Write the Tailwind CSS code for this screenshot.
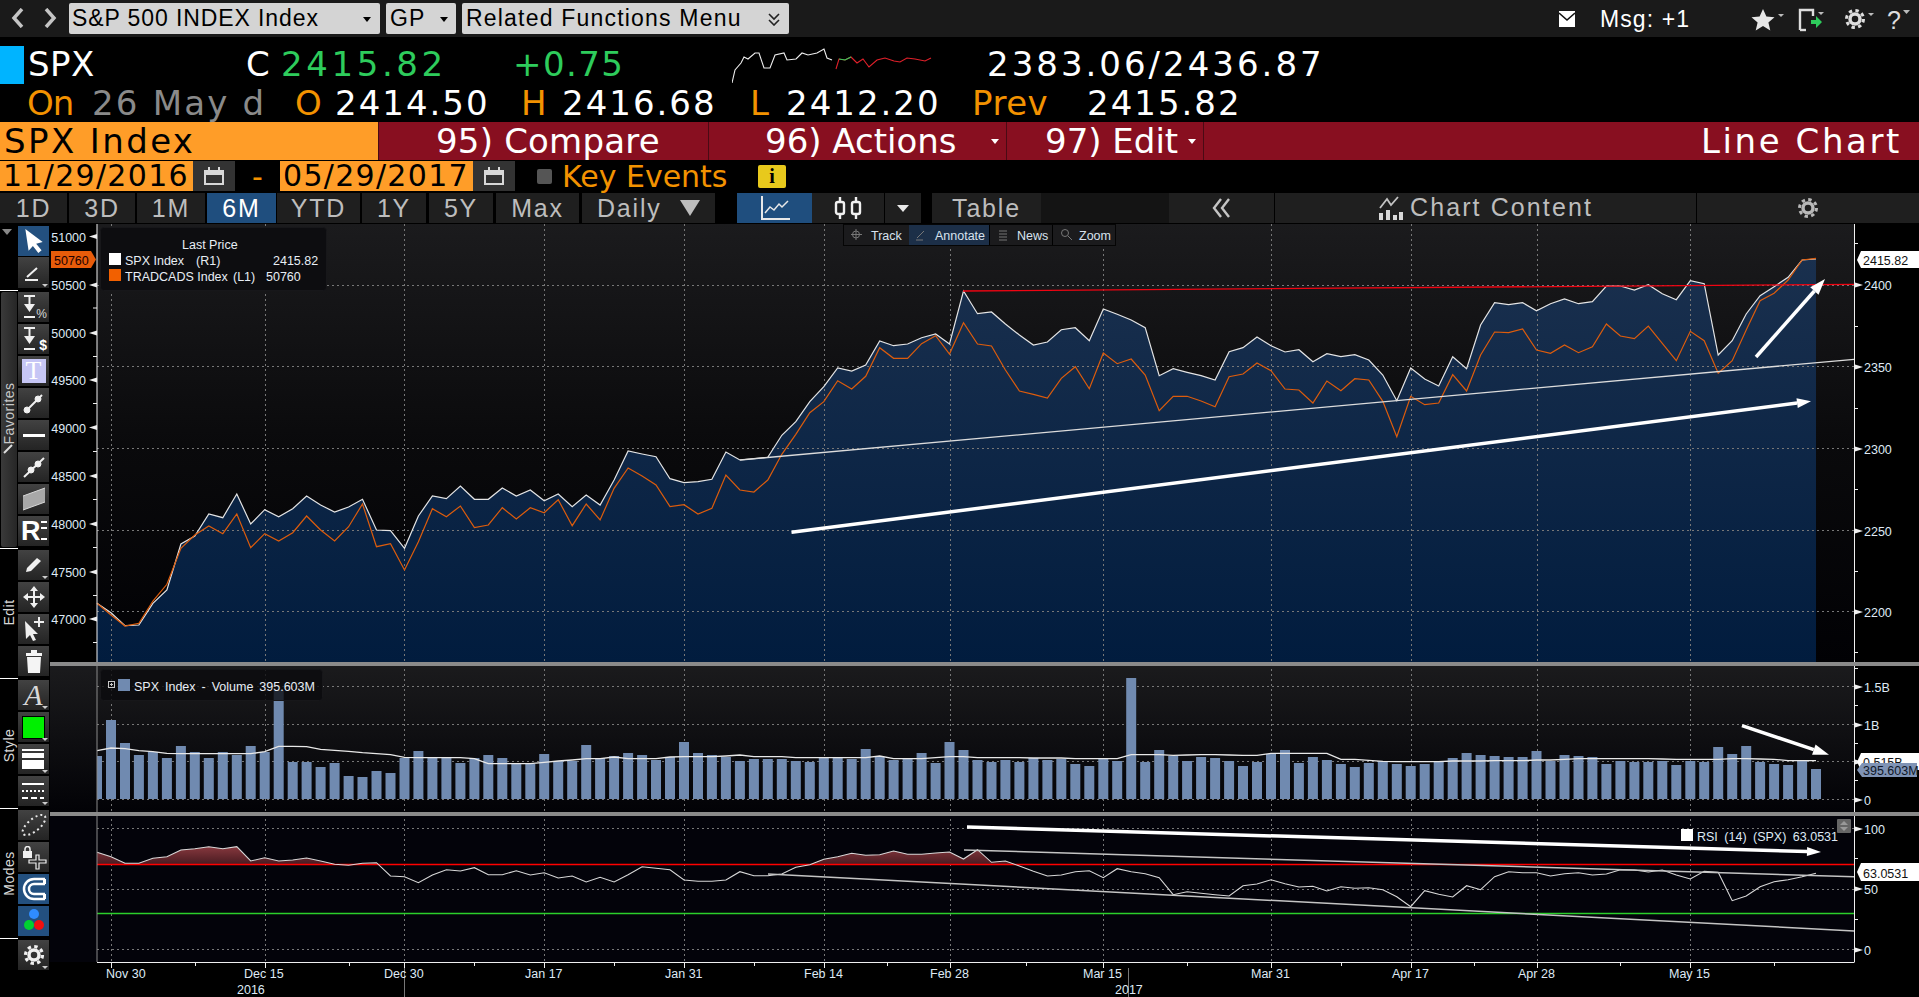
<!DOCTYPE html>
<html lang="en">
<head>
<meta charset="UTF-8">
<title>SPX Index Line Chart</title>
<script src="https://cdn.jsdelivr.net/npm/@tailwindcss/browser@4"></script>
</head>
<body class="bg-black w-[1919px] h-[997px] overflow-hidden text-white font-['Liberation_Sans',sans-serif]">

<!-- Top bar -->
<div class="h-[37px] bg-[#1a1a1a] flex items-center relative text-[23px] text-black">
  <svg class="absolute left-[11px] top-[8px]" width="50" height="20" viewBox="0 0 50 20" fill="none" stroke="#c4c4c4" stroke-width="3.500"><path d="M11 1 3 10l8 9M35 1l8 9-8 9"/></svg>
  <div class="absolute left-[69px] top-[3px] w-[311px] h-[31px] bg-[#d4d4d4] rounded-[2px] flex items-center pl-[3px] tracking-[0.900px]">S&amp;P 500 INDEX Index
    <span class="absolute right-[9px] top-[14px] border-x-[4px] border-x-transparent border-t-[5px] border-t-black"></span></div>
  <div class="absolute left-[386px] top-[3px] w-[70px] h-[31px] bg-[#d4d4d4] rounded-[2px] flex items-center pl-[4px] tracking-[1px]">GP
    <span class="absolute right-[8px] top-[14px] border-x-[4px] border-x-transparent border-t-[5px] border-t-black"></span></div>
  <div class="absolute left-[462px] top-[3px] w-[327px] h-[31px] bg-[#d4d4d4] rounded-[2px] flex items-center pl-[4px] tracking-[1.200px]">Related Functions Menu
    <svg class="absolute right-[9px] top-[10px]" width="12" height="13" viewBox="0 0 12 13" fill="none" stroke="#222" stroke-width="1.6"><path d="M1 1l5 5 5-5M1 7l5 5 5-5"/></svg></div>
  <svg class="absolute left-[1559px] top-[11px]" width="16" height="16" viewBox="0 0 16 16"><rect width="16" height="16" fill="#fff"/><path d="M0 2l8 7 8-7" fill="none" stroke="#111" stroke-width="1.6"/></svg>
  <span class="absolute left-[1600px] top-[2px] text-white text-[23px] tracking-[1.100px]">Msg: +1</span>
  <svg class="absolute left-[1750px] top-[8px]" width="36" height="24" viewBox="0 0 36 24"><path d="M13 1l3.4 7.6 8.1.7-6.1 5.3 1.9 8L13 18l-7.3 4.6 1.9-8L1.500 9.300l8.100-.7z" fill="#e6e6e6"/><path d="M28 6h6l-3 3z" fill="#bbb"/></svg>
  <svg class="absolute left-[1798px] top-[8px]" width="34" height="24" viewBox="0 0 34 24"><path d="M2 22V2h13v6" fill="none" stroke="#ddd" stroke-width="2.400"/><path d="M2 22h6" stroke="#ddd" stroke-width="2.400"/><path d="M13 12h5V8l6 6-6 6v-4h-5z" fill="#2ecc5c"/><path d="M20 4h6l-3 3z" fill="#bbb"/></svg>
  <svg class="absolute left-[1843px] top-[8px]" width="34" height="24" viewBox="0 0 34 24"><circle cx="12" cy="11" r="5" fill="none" stroke="#ddd" stroke-width="3.500"/><circle cx="12" cy="11" r="8.500" fill="none" stroke="#ddd" stroke-width="3" stroke-dasharray="3.400 3.300"/><path d="M25 5h6l-3 3z" fill="#bbb"/></svg>
  <span class="absolute left-[1887px] top-[2px] text-[#ddd] text-[25px]">?</span>
  <svg class="absolute left-[1903px] top-[10px]" width="8" height="5" viewBox="0 0 8 5"><path d="M0 0h7l-3.500 4z" fill="#bbb"/></svg>
</div>

<!-- Quote row 1 -->
<div class="h-[48px] pt-[7px] flex items-center text-[34px] font-['DejaVu_Sans',sans-serif] whitespace-pre">
  <div class="w-[24px] h-[38px] bg-[#00b4ff] self-start mt-[2px]"></div>
  <span class="ml-[4px] w-[218px] tracking-[0.5px]">SPX</span>
  <span class="w-[35px]">C</span>
  <span class="w-[232px] text-[#2ecc5c] tracking-[3.600px]">2415.82</span>
  <span class="w-[219px] text-[#2ecc5c] tracking-[1.400px]">+0.75</span>
  <svg class="w-[203px] h-[37px] self-start mt-[4px]" viewBox="732 48 203 37" fill="none" stroke-width="1.100">
    <polyline stroke="#eee" points="732,83 735,70 741,63 744,57 748,59 755,53 759,53 764,68 770,68 775,55 784,53 787,60 796,59 802,53 808,55 817,53 824,49 827,58 832,60"/>
    <polyline stroke="#e0202a" points="836,69 839,59 845,60 851,57 857,63 863,59 869,67 877,60 885,58 894,61 900,62 907,58 915,59 925,61 931,58"/>
    <polyline stroke="#2ecc5c" points="839,59 845,60 851,57M877,60 885,58M907,58 915,59 M925,61 935,57"/>
  </svg>
  <span class="ml-[52px] tracking-[3px]">2383.06/2436.87</span>
</div>

<!-- Quote row 2 -->
<div class="h-[37px] flex items-center pl-[27px] text-[34px] font-['DejaVu_Sans',sans-serif] whitespace-pre">
  <span class="w-[65px] text-[#f39200] tracking-[-1px]">On</span>
  <span class="w-[203px] text-[#8a8a8a] tracking-[2.200px]">26 May d</span>
  <span class="w-[40px] text-[#f39200]">O</span>
  <span class="w-[186px] tracking-[2px]">2414.50</span>
  <span class="w-[41px] text-[#f39200]">H</span>
  <span class="w-[188px] tracking-[2px]">2416.68</span>
  <span class="w-[36px] text-[#f39200]">L</span>
  <span class="w-[186px] tracking-[2px]">2412.20</span>
  <span class="w-[115px] text-[#f39200] tracking-[0.5px]">Prev</span>
  <span class="tracking-[2px]">2415.82</span>
</div>

<!-- Title bar -->
<div class="h-[38px] flex text-[34px] font-['DejaVu_Sans',sans-serif] bg-[#880f20] whitespace-pre">
  <div class="w-[378px] bg-[#ff9d28] text-black pl-[4px] leading-[38px] tracking-[2.400px]">SPX Index</div>
  <div class="w-[330px] border-l border-[#4a0a14] pl-[57px] leading-[38px] tracking-[0.200px]">95) Compare</div>
  <div class="w-[298px] border-l border-[#4a0a14] pl-[56px] leading-[38px] relative">96) Actions<span class="absolute right-[7px] top-[17px] border-x-[4px] border-x-transparent border-t-[5px] border-t-white"></span></div>
  <div class="w-[197px] border-l border-[#4a0a14] pl-[38px] leading-[38px] relative">97) Edit<span class="absolute right-[7px] top-[17px] border-x-[4px] border-x-transparent border-t-[5px] border-t-white"></span></div>
  <div class="flex-1 border-l border-[#4a0a14] text-right pr-[17px] leading-[38px] tracking-[2.600px]">Line Chart</div>
</div>

<!-- Date row -->
<div class="h-[30px] mt-[1px] flex items-center text-[30px] font-['DejaVu_Sans',sans-serif] whitespace-pre">
  <div class="w-[193px] h-[30px] bg-[#ff9d28] text-black leading-[30px] pl-[3px] tracking-[1.300px]">11/29/2016</div>
  <div class="w-[42px] h-[30px] bg-[#333] flex items-center justify-center">
    <svg width="20" height="18" viewBox="0 0 20 18"><rect x="0" y="3" width="20" height="15" fill="#d8d8d8"/><rect x="2" y="8" width="16" height="8" fill="#333"/><rect x="4" y="0" width="2" height="5" fill="#d8d8d8"/><rect x="14" y="0" width="2" height="5" fill="#d8d8d8"/></svg>
  </div>
  <span class="w-[45px] text-center text-[#f39200]">-</span>
  <div class="w-[193px] h-[30px] bg-[#ff9d28] text-black leading-[30px] pl-[3px] tracking-[1.300px]">05/29/2017</div>
  <div class="w-[42px] h-[30px] bg-[#333] flex items-center justify-center">
    <svg width="20" height="18" viewBox="0 0 20 18"><rect x="0" y="3" width="20" height="15" fill="#d8d8d8"/><rect x="2" y="8" width="16" height="8" fill="#333"/><rect x="4" y="0" width="2" height="5" fill="#d8d8d8"/><rect x="14" y="0" width="2" height="5" fill="#d8d8d8"/></svg>
  </div>
  <div class="ml-[22px] w-[15px] h-[15px] bg-[#555] rounded-[2px]"></div>
  <span class="ml-[10px] w-[196px] text-[#f39200]">Key Events</span>
  <div class="w-[28px] h-[23px] bg-[#e8c91c] rounded-[2px] flex items-center justify-center text-black text-[20px] font-bold font-['Liberation_Serif',serif]">i</div>
</div>

<!-- Range toolbar -->
<div class="h-[30px] mt-[2px] flex text-[#bdbdbd] text-[25px] tracking-[1.800px] whitespace-pre">
  <div class="w-[67px] mr-[2px] bg-[#1f1f1f] text-center leading-[30px]">1D</div>
  <div class="w-[66px] mr-[2px] bg-[#1f1f1f] text-center leading-[30px]">3D</div>
  <div class="w-[68px] mr-[2px] bg-[#1f1f1f] text-center leading-[30px]">1M</div>
  <div class="w-[69px] mr-[1px] bg-[#1f4e7e] text-white text-center leading-[30px]">6M</div>
  <div class="w-[83px] mr-[2px] bg-[#1f1f1f] text-center leading-[30px]">YTD</div>
  <div class="w-[64px] mr-[3px] bg-[#1f1f1f] text-center leading-[30px]">1Y</div>
  <div class="w-[64px] mr-[3px] bg-[#1f1f1f] text-center leading-[30px]">5Y</div>
  <div class="w-[83px] mr-[3px] bg-[#1f1f1f] text-center leading-[30px]">Max</div>
  <div class="w-[133px] mr-[22px] bg-[#1f1f1f] leading-[30px] pl-[15px] relative">Daily<span class="absolute right-[15px] top-[7px] border-x-[10px] border-x-transparent border-t-[16px] border-t-[#bdbdbd]"></span></div>
  <div class="w-[75px] bg-[#1f4e7e] flex items-center justify-center">
    <svg width="32" height="26" viewBox="0 0 32 26" fill="none" stroke="#e8e8e8" stroke-width="2"><path d="M3 1v23h28"/><path d="M6 18l5-6 4 3 5-6 3 3 6-6" stroke-width="1.500"/></svg>
  </div>
  <div class="w-[72px] mr-[1px] bg-[#1f1f1f] flex items-center justify-center">
    <svg width="28" height="24" viewBox="0 0 28 24" fill="none" stroke="#f0f0f0" stroke-width="2.400"><path d="M6 1v5M6 18v5M22 1v5M22 18v5"/><rect x="2" y="6" width="8" height="12" rx="2"/><rect x="18" y="6" width="8" height="12" rx="2"/></svg>
  </div>
  <div class="w-[36px] mr-[11px] bg-[#1f1f1f] flex items-center justify-center"><span class="border-x-[6px] border-x-transparent border-t-[7px] border-t-[#e8e8e8]"></span></div>
  <div class="w-[109px] bg-[#1f1f1f] text-center leading-[30px]">Table</div>
  <div class="w-[128px] bg-[#141414]"></div>
  <div class="w-[105px] mr-[1px] bg-[#1f1f1f] flex items-center justify-center">
    <svg width="22" height="20" viewBox="0 0 22 20" fill="none" stroke="#c4c4c4" stroke-width="2.400"><path d="M10 1 3 10l7 9M18 1l-7 9 7 9"/></svg>
  </div>
  <div class="w-[421px] mr-[1px] bg-[#1f1f1f] flex items-center justify-center gap-[6px] tracking-[2.100px]">
    <svg width="26" height="24" viewBox="0 0 26 24"><path d="M2 12l7-9 4 6 7-8" fill="none" stroke="#c4c4c4" stroke-width="1.800"/><path d="M1 17h4v7H1zM8 14h4v10H8zM15 19h4v5h-4zM21 16h4v8h-4z" fill="#d8d8d8"/></svg>
    <span>Chart Content</span>
  </div>
  <div class="flex-1 bg-[#1f1f1f] flex items-center justify-center">
    <svg width="22" height="22" viewBox="0 0 22 22" fill="none" stroke="#b8b8b8"><circle cx="11" cy="11" r="5" stroke-width="3.500"/><circle cx="11" cy="11" r="8.500" stroke-width="3" stroke-dasharray="3.400 3.270"/></svg>
  </div>
</div>

<!-- Chart area -->
<div class="h-[773px] mt-[1px] flex relative">
  <!-- Left tool rail -->
  <div class="w-[50px] shrink-0 text-[#d8d8d8] text-[14px]">
    <div class="h-[66px] flex">
      <div class="w-[18px] pt-[5px] pl-[2px]"><span class="block w-0 border-x-[5px] border-x-transparent border-t-[6px] border-t-[#888]"></span></div>
      <div class="flex flex-col gap-[1px] pt-[2px]">
        <div class="w-[31px] h-[30px] bg-[#23507f] flex items-center justify-center"><svg width="24" height="26" viewBox="0 0 22 24"><path d="M3 1l16 12-6 1.500 5 6-3 2.500-5-6.500L6 21z" fill="#fff"/></svg></div>
        <div class="w-[31px] h-[31px] bg-linear-to-b from-[#424242] to-[#242424] flex items-center justify-center relative"><svg width="20" height="18" viewBox="0 0 20 18" fill="none" stroke="#eee" stroke-width="2"><path d="M3 13 13 4M1 16h13"/></svg><span class="absolute right-[1px] bottom-[1px] border-x-[3px] border-x-transparent border-t-[3px] border-t-[#ccc]"></span></div>
      </div>
    </div>

    <div class="h-[258px] flex">
      <div class="w-[18px] border-t border-white mr-0 relative">
        <div class="absolute left-[1px] top-[1px] w-[16px] h-[255px] bg-linear-to-r from-[#3a3a3a] to-[#262626] rounded-[2px]"></div>
        <span class="absolute left-[-21px] top-[113px] w-[60px] -rotate-90 text-[14px] tracking-[0.5px] text-[#c8c8c8]">Favorites</span>
        <svg class="absolute left-[3px] top-[152px]" width="11" height="11" viewBox="0 0 11 11"><path d="M1 10l8-8" stroke="#ddd" stroke-width="2"/></svg>
      </div>
      <div class="flex flex-col gap-[2px] pt-[2px]">
        <div class="w-[31px] h-[30px] bg-linear-to-b from-[#424242] to-[#242424] relative text-[12px]"><svg class="absolute left-[3px] top-[2px]" width="18" height="26" viewBox="0 0 18 26" fill="#f0f0f0"><path d="M3 1h11v2H9.500v7H14l-5.500 8L3 10h4.500V3H3zM3 22h11v2H3z"/></svg><span class="absolute right-[2px] bottom-[2px] leading-none">%</span></div>
        <div class="w-[31px] h-[30px] bg-linear-to-b from-[#424242] to-[#242424] relative text-[14px] font-bold"><svg class="absolute left-[3px] top-[2px]" width="18" height="26" viewBox="0 0 18 26" fill="#f0f0f0"><path d="M3 1h11v2H9.500v7H14l-5.500 8L3 10h4.500V3H3zM3 22h11v2H3z"/></svg><span class="absolute right-[2px] bottom-[2px] leading-none text-white">$</span></div>
        <div class="w-[31px] h-[30px] bg-linear-to-b from-[#424242] to-[#242424] flex items-center justify-center"><div class="w-[24px] h-[24px] bg-[#c6c6f5] text-white text-center text-[26px] leading-[24px] font-['Liberation_Serif',serif]">T</div></div>
        <div class="w-[31px] h-[30px] bg-linear-to-b from-[#424242] to-[#242424] flex items-center justify-center"><svg width="24" height="24" viewBox="0 0 24 24" fill="#f0f0f0" stroke="#f0f0f0"><path d="M4 20 20 4" stroke-width="2"/><circle cx="5" cy="19" r="3"/><circle cx="16" cy="8" r="3"/></svg></div>
        <div class="w-[31px] h-[30px] bg-linear-to-b from-[#424242] to-[#242424] flex items-center justify-center"><div class="w-[22px] h-[3px] bg-white"></div></div>
        <div class="w-[31px] h-[30px] bg-linear-to-b from-[#424242] to-[#242424] flex items-center justify-center"><svg width="24" height="24" viewBox="0 0 24 24" fill="#f0f0f0" stroke="#f0f0f0"><path d="M2 22 22 3" stroke-width="2"/><circle cx="9" cy="15" r="3"/><circle cx="16" cy="9" r="3"/></svg></div>
        <div class="w-[31px] h-[30px] bg-linear-to-b from-[#424242] to-[#242424] flex items-center justify-center"><svg width="24" height="24" viewBox="0 0 24 24"><path d="M1 9 23 1v14L1 23z" fill="#a8a8a8"/><path d="M1 9 23 1M1 23 23 15" stroke="#d8d8d8"/></svg></div>
        <div class="w-[31px] h-[30px] bg-linear-to-b from-[#424242] to-[#242424] relative"><span class="absolute left-[3px] top-[1px] text-[27px] leading-[28px] font-bold text-white">R</span><span class="absolute right-[2px] top-[5px] w-[6px] h-[2px] bg-white"></span><span class="absolute right-[2px] top-[11px] w-[6px] h-[2px] bg-white"></span><span class="absolute right-[2px] top-[22px] w-[6px] h-[2px] bg-white"></span></div>
      </div>
    </div>

    <div class="h-[130px] flex">
      <div class="w-[18px] border-t border-white relative"><span class="absolute left-[-21px] top-[53px] w-[60px] text-center -rotate-90 text-[14px] tracking-[0.5px]">Edit</span></div>
      <div class="flex flex-col gap-[2px] pt-[2px]">
        <div class="w-[31px] h-[30px] bg-linear-to-b from-[#424242] to-[#242424] flex items-center justify-center relative"><svg width="22" height="20" viewBox="0 0 22 20"><path d="M4 13 14 3l4 3L8 16l-5 1z" fill="#f0f0f0"/></svg><span class="absolute right-[1px] bottom-[1px] border-x-[3px] border-x-transparent border-t-[3px] border-t-[#ccc]"></span></div>
        <div class="w-[31px] h-[30px] bg-linear-to-b from-[#424242] to-[#242424] flex items-center justify-center"><svg width="24" height="24" viewBox="0 0 24 24" fill="#f0f0f0"><path d="M12 1l4 5h-3v5h5V8l5 4-5 4v-3h-5v5h3l-4 5-4-5h3v-5H6v3l-5-4 5-4v3h5V6H8z"/></svg></div>
        <div class="w-[31px] h-[30px] bg-linear-to-b from-[#424242] to-[#242424] flex items-center justify-center"><svg width="24" height="26" viewBox="0 0 24 26" fill="#f0f0f0"><path d="M3 5l13 13-5 0 3 6-3 1-3-6-4 4zM16 1h2v4h4v2h-4v4h-2V7h-4V5h4z"/></svg></div>
        <div class="w-[31px] h-[30px] bg-linear-to-b from-[#424242] to-[#242424] flex items-center justify-center"><svg width="20" height="26" viewBox="0 0 20 26" fill="#f4f4f4"><path d="M2 5h16v3H2zM7 2h6v3H7zM3 9h14l-1 16H4z"/></svg></div>
      </div>
    </div>

    <div class="h-[130px] flex">
      <div class="w-[18px] border-t border-white relative"><span class="absolute left-[-21px] top-[56px] w-[60px] text-center -rotate-90 text-[14px] tracking-[0.5px]">Style</span></div>
      <div class="flex flex-col gap-[2px] pt-[2px]">
        <div class="w-[31px] h-[30px] bg-linear-to-b from-[#424242] to-[#242424] relative text-center font-['Liberation_Serif',serif] italic text-[30px] leading-[30px]">A<span class="absolute right-[1px] bottom-[1px] border-x-[3px] border-x-transparent border-t-[3px] border-t-[#ccc]"></span></div>
        <div class="w-[31px] h-[30px] bg-linear-to-b from-[#424242] to-[#242424] flex items-center justify-center relative"><div class="w-[23px] h-[23px] bg-[#00f000] border border-black"></div><span class="absolute right-[1px] bottom-[1px] border-x-[3px] border-x-transparent border-t-[3px] border-t-[#ccc]"></span></div>
        <div class="w-[31px] h-[30px] bg-linear-to-b from-[#424242] to-[#242424] relative"><span class="absolute left-[4px] top-[5px] w-[22px] h-[2px] bg-white"></span><span class="absolute left-[4px] top-[9px] w-[22px] h-[5px] bg-white"></span><span class="absolute left-[4px] top-[16px] w-[22px] h-[9px] bg-white"></span><span class="absolute right-[1px] bottom-[1px] border-x-[3px] border-x-transparent border-t-[3px] border-t-[#ccc]"></span></div>
        <div class="w-[31px] h-[30px] bg-linear-to-b from-[#424242] to-[#242424] relative"><svg class="absolute left-[4px] top-[6px]" width="22" height="18" viewBox="0 0 22 18" stroke="#fff" stroke-width="2"><path d="M0 2h22"/><path d="M0 9h22" stroke-dasharray="2 2"/><path d="M0 16h22" stroke-dasharray="6 3"/></svg><span class="absolute right-[1px] bottom-[1px] border-x-[3px] border-x-transparent border-t-[3px] border-t-[#ccc]"></span></div>
      </div>
    </div>

    <div class="h-[130px] flex">
      <div class="w-[18px] border-t border-white relative"><span class="absolute left-[-21px] top-[54px] w-[60px] text-center -rotate-90 text-[14px] tracking-[0.5px]">Modes</span></div>
      <div class="flex flex-col gap-[2px] pt-[2px]">
        <div class="w-[31px] h-[30px] bg-linear-to-b from-[#424242] to-[#242424] flex items-center justify-center"><svg width="26" height="26" viewBox="0 0 26 26"><ellipse cx="13" cy="13" rx="14" ry="6" transform="rotate(-40 13 13)" fill="none" stroke="#e8e8e8" stroke-width="2" stroke-dasharray="2 3"/></svg></div>
        <div class="w-[31px] h-[30px] bg-linear-to-b from-[#424242] to-[#242424] relative"><svg class="absolute left-[5px] top-[4px]" width="24" height="25" viewBox="0 0 24 25" fill="#f0f0f0"><rect x="0" y="5" width="9" height="7"/><path d="M2 5V3a2.500 2.500 0 0 1 5 0v2" fill="none" stroke="#f0f0f0" stroke-width="1.500"/><path d="M13 9h3v5h7v3h-7v6h-3v-6H6v-3h7z" fill="none" stroke="#f0f0f0" stroke-width="1.200"/></svg></div>
        <div class="w-[31px] h-[30px] bg-[#23507f] flex items-center justify-center"><svg width="24" height="24" viewBox="0 0 24 24" fill="none" stroke="#fff" stroke-width="2.500"><path d="M23 2H12a10 10 0 0 0 0 20h11M23 7H12a5 5 0 0 0 0 10h11"/><path d="M23 2v5M23 17v5" stroke-width="4"/></svg></div>
        <div class="w-[31px] h-[30px] bg-[#23507f] relative"><span class="absolute left-[11px] top-[3px] w-[10px] h-[10px] rounded-full bg-[#2f8cff]"></span><span class="absolute left-[6px] top-[14px] w-[10px] h-[10px] rounded-full bg-[#00d030]"></span><span class="absolute left-[16px] top-[14px] w-[10px] h-[10px] rounded-full bg-[#f01010]"></span></div>
      </div>
    </div>

    <div class="h-[35px] flex">
      <div class="w-[18px] border-t border-white"></div>
      <div class="pt-[2px]">
        <div class="w-[31px] h-[30px] bg-linear-to-b from-[#424242] to-[#242424] flex items-center justify-center relative"><svg width="22" height="22" viewBox="0 0 22 22" fill="none" stroke="#f0f0f0"><circle cx="11" cy="11" r="5" stroke-width="3.500"/><circle cx="11" cy="11" r="8.500" stroke-width="3.200" stroke-dasharray="3.400 3.270"/></svg><span class="absolute right-[1px] bottom-[1px] border-x-[3px] border-x-transparent border-t-[3px] border-t-[#ccc]"></span></div>
      </div>
    </div>
  </div>

  <!-- Chart canvas, drawn in page coordinates -->
  <svg id="chart" class="w-[1869px] h-[773px] shrink-0" viewBox="50 224 1869 773" font-family="Liberation Sans" font-size="12.5">
    <defs>
      <linearGradient id="panelA" x1="0" y1="0" x2="0" y2="1"><stop offset="0" stop-color="#1b1b1d"/><stop offset="0.5" stop-color="#0a0a0c"/><stop offset="1" stop-color="#010104"/></linearGradient>
      <linearGradient id="panelB" x1="0" y1="0" x2="0" y2="1"><stop offset="0" stop-color="#1b1b1d"/><stop offset="1" stop-color="#020206"/></linearGradient>
      <linearGradient id="area" gradientUnits="userSpaceOnUse" x1="0" y1="255" x2="0" y2="663"><stop offset="0" stop-color="#1a304e"/><stop offset="1" stop-color="#011c3e"/></linearGradient>
      <linearGradient id="rsiFill" gradientUnits="userSpaceOnUse" x1="0" y1="845" x2="0" y2="864"><stop offset="0" stop-color="#8c3a40"/><stop offset="1" stop-color="#4a1c22"/></linearGradient>
      <clipPath id="above70"><rect x="97" y="820" width="1760" height="44"/></clipPath>
      <clipPath id="plot"><rect x="97" y="224" width="1757" height="740"/></clipPath>
    </defs>
    <rect x="97" y="224" width="1757" height="439" fill="url(#panelA)"/>
    <rect x="50" y="664" width="1804" height="149" fill="url(#panelB)"/>
    <rect x="50" y="814" width="1804" height="148" fill="#03030a"/>
    <path id="areaPath" fill="url(#area)"/>
    <g id="grid" stroke="#777" stroke-dasharray="2 3"></g>
    <path id="rsiArea" fill="url(#rsiFill)" clip-path="url(#above70)"/>
    <g id="bars" fill="#708ab0" clip-path="url(#plot)"></g>
    <path d="M97 864.500H1854" stroke="#ff0000" stroke-width="1.700"/>
    <path d="M97 913.500H1854" stroke="#2bd02b" stroke-width="1.400"/>
    <path id="volAvg" fill="none" stroke="#e8e8e8" stroke-width="1.300"/>
    <path id="spx" fill="none" stroke="#e4e4e4" stroke-width="1.200"/>
    <path id="trad" fill="none" stroke="#dd5c0c" stroke-width="1.200"/>
    <path id="rsi" fill="none" stroke="#d8d8d8" stroke-width="1.100"/>
    <!-- Drawn trend lines -->
    <path d="M963 291 1855 284.300" stroke="#f00412" stroke-width="1.300"/>
    <path d="M740 460 1854 359.300" stroke="#dcdcdc" stroke-width="1.300"/>
    <path d="M964 850 1854 876.700" stroke="#c4c4c4" stroke-width="1.500"/>
    <path d="M768 874 1854 931" stroke="#c4c4c4" stroke-width="1.500"/>
    <g id="arrows" fill="#fff"></g>
    <!-- Axes -->
    <path d="M97 224V663" stroke="#f0f0f0"/>
    <path d="M97 664V962" stroke="#8a8a8a"/>
    <path d="M1854.500 224V962M97 962.500H1854.500" stroke="#f0f0f0"/>
    <g id="ticks"></g>
    <rect x="50" y="662" width="1869" height="4" fill="#8a8a8a"/>
    <rect x="50" y="812" width="1869" height="4" fill="#8a8a8a"/>
    <g id="labels" fill="#dfeaf5"></g>

    <!-- Price tags -->
    <polygon points="51,251 91,251 96,259.500 91,268 51,268" fill="#e85c0a"/>
    <text x="54" y="264.500" fill="#200" font-size="12.5">50760</text>
    <polygon points="1857,260 1861,251 1919,251 1919,268 1861,268" fill="#fff"/>
    <text x="1863" y="264.500" fill="#111">2415.82</text>
    <polygon points="1857,762 1861,753 1919,753 1919,770 1861,770" fill="#fff"/>
    <text x="1863" y="767" fill="#111">0.515B</text>
    <polygon points="1857,770 1862,763 1917,763 1917,777 1862,777" fill="#7f93b5"/>
    <text x="1863" y="775" fill="#101828">395.603M</text>
    <polygon points="1857,872 1861,863 1919,863 1919,881 1861,881" fill="#fff"/>
    <text x="1863" y="877.500" fill="#111">63.0531</text>

    <!-- Legends -->
    <rect x="100.500" y="227.500" width="226" height="63" rx="3" fill="#0d0d10" stroke="#17171a"/>
    <text x="182" y="248.500" fill="#e8eef5">Last Price</text>
    <rect x="109" y="253" width="12" height="12" fill="#fff"/>
    <text x="125" y="264.500" fill="#e8eef5">SPX Index</text>
    <text x="196" y="264.500" fill="#e8eef5">(R1)</text>
    <text x="273" y="264.500" fill="#e8eef5">2415.82</text>
    <rect x="109" y="269" width="12" height="12" fill="#f26000"/>
    <text x="125" y="280.500" fill="#e8eef5">TRADCADS Index</text>
    <text x="233" y="280.500" fill="#e8eef5">(L1)</text>
    <text x="266" y="280.500" fill="#e8eef5">50760</text>

    <rect x="100.500" y="669.500" width="222" height="31" rx="3" fill="#0a0a0d" fill-opacity="0.78" stroke="#17171a"/>
    <rect x="108.500" y="681.500" width="6" height="6" fill="none" stroke="#c8c8c8"/>
    <path d="M110 684.500h3M111.500 683v3" stroke="#c8c8c8"/>
    <rect x="118" y="679" width="12" height="12" fill="#708ab0"/>
    <text x="134" y="690.500" fill="#e8eef5" word-spacing="2.500">SPX Index - Volume 395.603M</text>

    <rect x="1681" y="829" width="12" height="12" fill="#fff"/>
    <text x="1697" y="840.500" fill="#dfeaf5" word-spacing="3">RSI (14) (SPX) 63.0531</text>
    <rect x="1837" y="819" width="14" height="14" rx="1" fill="#666"/>
    <path d="M1840 825h8l-4-4zM1840 827h8l-4 4z" fill="#999"/>

    <!-- Floating chart toolbar -->
    <rect x="843.500" y="224.500" width="272" height="21" fill="#1b1b1d" stroke="#050505"/>
    <rect x="909" y="225" width="80" height="20" fill="#1c2f48"/>
    <rect x="989" y="225" width="1" height="20" fill="#000"/>
    <rect x="1052" y="225" width="1" height="20" fill="#000"/>
    <g stroke="#777" fill="none"><circle cx="856" cy="234.500" r="3.500"/><path d="M856 229v11M851 234.500h11M917 238l7-7M916 240h7M999 231h8M999 234h8M999 237h8M999 240h8"/><circle cx="1065" cy="233" r="3.500"/><path d="M1068 236l4 4"/></g>
    <g fill="#d8e2ee"><text x="871" y="239.500">Track</text><text x="935" y="239.500">Annotate</text><text x="1017" y="239.500">News</text><text x="1079" y="239.500">Zoom</text></g>
  </svg>
</div>

<script>
  const X0 = 97, DX = 13.976;
  const xAt = i => X0 + DX * i;
  // values read as y positions, in zoom units of the panel they belong to
  const spxY = [1090,1118,1157,1155,1090,1050,912,888,822,833,762,852,809,830,806,768,795,816,801,778,870,872,925,828,768,776,738,778,778,744,768,750,782,762,800,765,795,720,633,642,650,716,728,725,718,636,660,656,652,586,545,485,440,384,393,375,303,317,312,293,282,312,153,221,216,252,285,315,306,269,263,302,207,223,240,263,407,386,397,407,420,335,323,291,317,336,329,365,341,350,344,360,405,482,384,417,438,350,386,255,188,194,188,212,191,177,191,185,138,138,150,134,161,179,122,131,345,302,222,167,140,112,60,57];
  const tradY = [1090,1125,1158,1150,1083,1033,925,885,858,881,822,923,881,903,878,828,870,903,860,792,920,911,990,905,806,830,798,863,855,803,837,803,818,779,857,792,840,745,684,708,735,800,794,822,805,705,750,756,720,643,583,518,485,422,447,409,323,355,355,311,287,342,248,312,318,390,453,463,474,415,380,446,339,371,357,405,512,469,469,483,500,410,402,369,392,447,450,489,423,452,416,420,484,590,469,494,489,404,453,345,276,278,267,330,340,315,338,320,252,288,296,258,310,362,274,302,400,362,270,182,160,120,60,55];
  const volTop = [288,180,249,285,276,294,258,276,294,276,285,258,276,90,306,306,321,309,348,351,333,339,294,273,294,294,309,294,285,294,312,312,282,303,303,255,294,288,279,285,300,291,246,279,285,291,303,297,297,297,303,306,294,294,297,267,291,300,297,279,309,246,270,300,306,300,306,294,300,297,312,318,294,303,54,306,270,288,303,291,294,303,318,306,282,270,309,291,300,312,321,309,303,312,318,312,306,294,279,285,288,291,291,273,303,285,288,291,312,303,306,306,303,315,303,306,261,282,258,306,312,315,303,327];
  const volAvgY = [272,264,266,272,275,280,281,281,281,281,281,281,275,259,259,260,268,271,274,278,281,284,292,293,293,293,293,296,311,311,311,311,307,303,300,296,296,291,296,296,296,291,290,290,290,288,285,290,290,290,293,293,293,293,293,293,288,296,296,296,293,290,290,293,293,293,293,294,294,294,296,296,296,296,284,284,284,286,285,284,284,285,286,286,280,280,280,280,280,298,298,301,304,305,305,305,305,303,303,303,302,302,302,300,300,298,296,296,296,296,296,296,297,298,298,298,298,296,296,297,298,302,302,302];
  const rsiY = [577,590,610,610,595,590,570,566,560,566,560,603,593,603,600,594,603,613,616,610,608,648,650,668,645,629,633,623,644,644,632,645,638,654,648,666,652,666,644,620,625,629,660,664,664,660,635,647,647,642,622,614,598,590,580,586,584,573,583,583,579,576,597,569,607,603,618,634,648,645,635,632,653,626,635,641,653,704,695,700,704,708,677,672,659,671,681,679,693,680,685,683,689,710,740,692,703,711,677,689,650,635,638,638,648,641,638,645,642,629,630,636,630,645,657,634,637,722,708,680,665,659,650,640];

  const line = (vals, base) => vals.map((y, i) => (i ? 'L' : 'M') + xAt(i).toFixed(1) + ' ' + (base + y / 3).toFixed(1)).join('');
  const endX = xAt(spxY.length - 1).toFixed(1);

  document.getElementById('spx').setAttribute('d', line(spxY, 240));
  document.getElementById('trad').setAttribute('d', line(tradY, 240));
  document.getElementById('areaPath').setAttribute('d', line(spxY, 240) + 'L' + endX + ' 662L' + X0 + ' 662Z');
  document.getElementById('volAvg').setAttribute('d', line(volAvgY, 660));
  document.getElementById('rsi').setAttribute('d', line(rsiY, 660));
  document.getElementById('rsiArea').setAttribute('d', line(rsiY, 660) + 'L' + endX + ' 864L' + X0 + ' 864Z');

  document.getElementById('bars').innerHTML = volTop.map((t, i) => {
    const y = 660 + t / 3;
    return `<rect x="${(xAt(i) - 5).toFixed(1)}" y="${y.toFixed(1)}" width="10" height="${(799 - y).toFixed(1)}"/>`;
  }).join('');

  let grid = '';
  [111.5, 265.5, 404.5, 544.5, 684.5, 824.5, 950.5, 1103.5, 1271.5, 1411.5, 1537.5, 1690.5].forEach(x => { grid += `<path d="M${x} 224V962"/>`; });
  [285.5, 366.5, 448.5, 530.5, 611.5, 686.5, 724.5, 761.5, 799.5, 828.5, 889.5, 949.5].forEach(y => { grid += `<path d="M97 ${y}H1854"/>`; });
  document.getElementById('grid').innerHTML = grid;

  const arrow = (x1, y1, x2, y2, w, len, half) => {
    const d = Math.hypot(x2 - x1, y2 - y1), ux = (x2 - x1) / d, uy = (y2 - y1) / d, bx = x2 - ux * len, by = y2 - uy * len;
    return `<path d="M${x1} ${y1}L${bx} ${by}" stroke="#fff" stroke-width="${w}"/><polygon points="${x2},${y2} ${bx - uy * half},${by + ux * half} ${bx + uy * half},${by - ux * half}"/>`;
  };
  document.getElementById('arrows').innerHTML =
    arrow(791.5, 532.3, 1811, 401.3, 3.5, 14, 5) +
    arrow(1756, 357, 1825, 279, 3.5, 16, 5.5) +
    arrow(1742, 725.7, 1829, 754.7, 3.5, 16, 5.5) +
    arrow(967, 827, 1821, 852, 3.5, 14, 4.5);

  let ticks = '', labels = '';
  const leftTick = y => `<path d="M93 ${y}H97" stroke="#eee"/>`;
  const leftMajor = y => `<polygon points="89,${y} 97,${y - 2.5} 97,${y + 2.5}" fill="#eee"/>`;
  const rightTick = y => `<path d="M1854 ${y}H1858" stroke="#eee"/>`;
  const rightMajor = y => `<polygon points="1863,${y} 1855,${y - 2.5} 1855,${y + 2.5}" fill="#eee"/>`;
  [308, 356.5, 403.5, 451.5, 499.5, 547.5, 595.5, 642.5].forEach(y => { ticks += leftTick(y); });
  [[51000,236.5],[50500,285],[50000,333],[49500,380],[49000,427.5],[48500,476],[48000,524],[47500,572],[47000,619]].forEach(([v, y]) => {
    ticks += leftMajor(y);
    labels += `<text x="86" y="${y + 5}" text-anchor="end">${v}</text>`;
  });
  [243.5, 326.5, 408.5, 489.5, 571.5, 652.5, 668.5, 705.5, 743.5, 780.5, 858.5, 919.5].forEach(y => { ticks += rightTick(y); });
  [['2400',285],['2350',367],['2300',449],['2250',531],['2200',612],['1.5B',687],['1B',725],['',762],['0',800],['100',829],['50',889],['0',950]].forEach(([v, y]) => {
    ticks += rightMajor(y);
    if (v) labels += `<text x="1864" y="${y + 5}">${v}</text>`;
  });
  [111.5, 265.5, 404.5, 544.5, 684.5, 824.5, 950.5, 1103.5, 1271.5, 1411.5, 1537.5, 1690.5].forEach(x => { ticks += `<path d="M${x} 962V968" stroke="#eee"/>`; });
  [195.5, 349.5, 474.5, 614.5, 754.5, 887.5, 1026.5, 1187.5, 1341.5, 1474.5, 1620.5, 1774.5].forEach(x => { ticks += `<path d="M${x} 962V966" stroke="#eee"/>`; });
  ticks += '<path d="M404.5 968V997" stroke="#777"/><path d="M1128.500 968V997" stroke="#777"/>';
  [['Nov 30',106],['Dec 15',244],['Dec 30',384],['Jan 17',525],['Jan 31',665],['Feb 14',804],['Feb 28',930],['Mar 15',1083],['Mar 31',1251],['Apr 17',1392],['Apr 28',1518],['May 15',1669]].forEach(([t, x]) => {
    labels += `<text x="${x}" y="977.500">${t}</text>`;
  });
  labels += '<text x="237" y="993.500">2016</text><text x="1115" y="993.500">2017</text>';
  document.getElementById('ticks').innerHTML = ticks;
  document.getElementById('labels').innerHTML = labels;
</script>
</body>
</html>
